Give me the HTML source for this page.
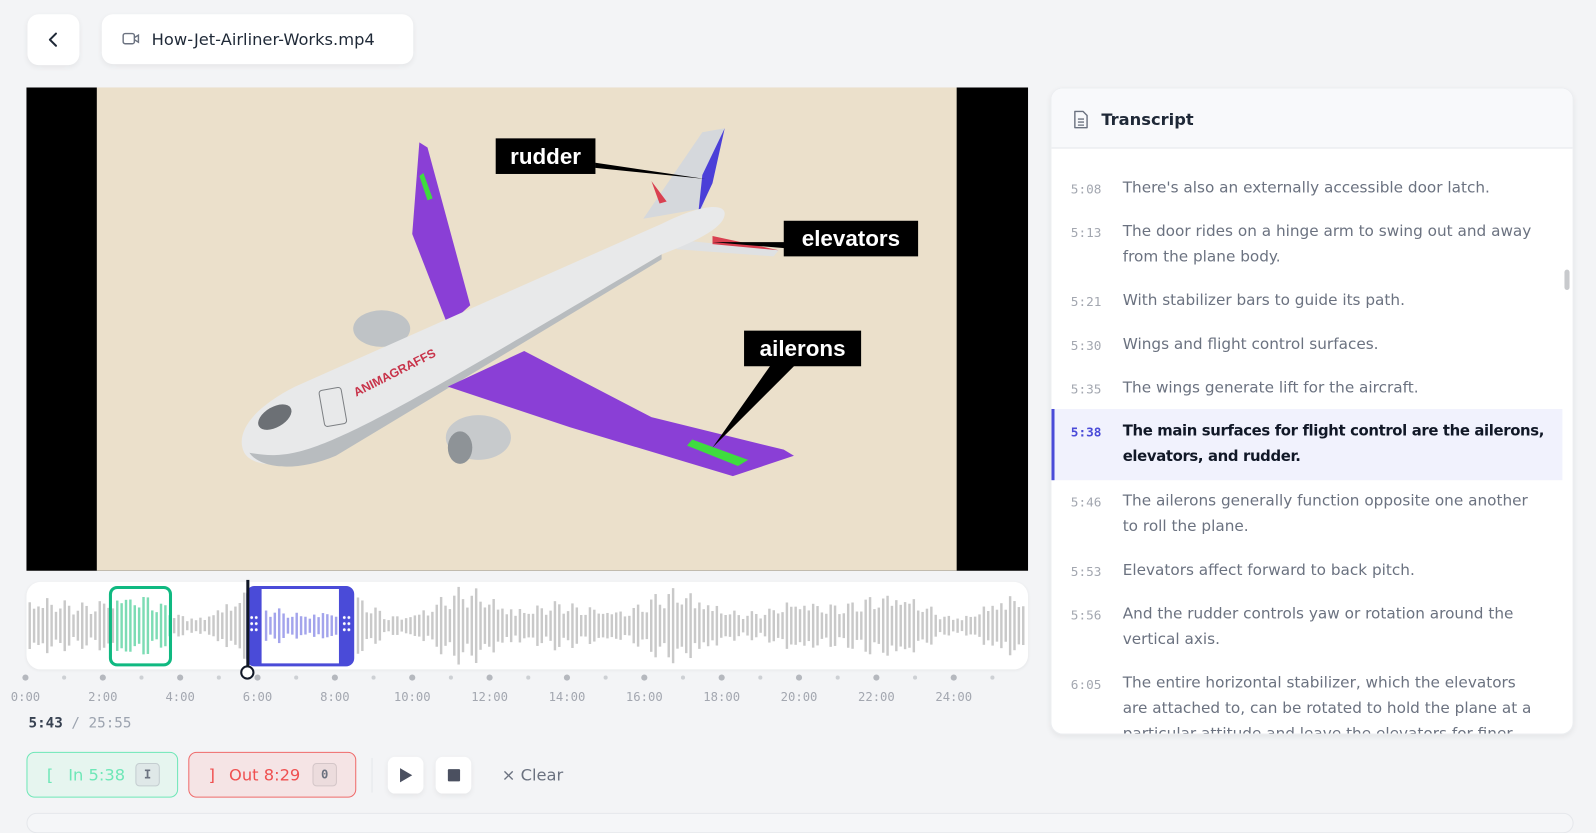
<!DOCTYPE html>
<html><head><meta charset="utf-8"><style>
*{box-sizing:border-box;margin:0;padding:0}
html,body{width:1596px;height:820px;overflow:hidden;background:#f3f4f6}
#w{position:absolute;left:0;top:0;width:1568px;height:806px;transform:scale(1.01786,1.01737);transform-origin:0 0;font-family:"Liberation Sans","DejaVu Sans",sans-serif}
.abs{position:absolute}
.card{background:#fff;border-radius:12px;box-shadow:0 2px 6px rgba(0,0,0,.06)}
.mono{font-family:"DejaVu Sans Mono","Liberation Mono",monospace}
.row{position:absolute;left:0;right:10px;display:flex;font-size:15px;line-height:25px;color:#6b7280;font-family:"DejaVu Sans",sans-serif}
.row .t{width:70px;padding-left:19px;font-size:12.5px;color:#a3a7b0;font-family:"DejaVu Sans Mono",monospace;padding-top:1px}
.row .x{flex:1;padding-right:20px}
.lbl{position:absolute;background:#000;color:#fff;font-weight:bold;font-size:22px;font-family:"Liberation Sans",sans-serif;text-align:center;line-height:35px}
.dots{position:absolute;top:30px;width:9px;height:18px;background:radial-gradient(circle,#fff 1.3px,transparent 1.6px) 0 0/4.5px 6px}
</style></head><body><div id="w">
<div class="abs card" style="left:27px;top:14px;width:51px;height:50px;border-radius:11px"><svg class="abs" style="left:17px;top:16px" width="18" height="18" viewBox="0 0 18 18"><path d="M11 3 L5 9 L11 15" fill="none" stroke="#1f2937" stroke-width="2" stroke-linecap="round" stroke-linejoin="round"/></svg></div>
<div class="abs card" style="left:100px;top:14px;width:306px;height:49px;border-radius:11px">
<svg class="abs" style="left:20px;top:17px" width="18" height="14" viewBox="0 0 18 14"><rect x="1" y="2" width="11" height="10" rx="2" fill="none" stroke="#6b7280" stroke-width="1.4"/><path d="M12 6 L16 3.5 V10.5 L12 8" fill="none" stroke="#6b7280" stroke-width="1.4"/></svg>
<div class="abs" style="left:49px;top:15px;font-size:16px;color:#1f2937;font-family:'DejaVu Sans',sans-serif;font-weight:500">How-Jet-Airliner-Works.mp4</div></div>

<div class="abs" style="left:26px;top:86px;width:984px;height:475px;background:#000"></div>
<svg class="abs" style="left:95px;top:86px" width="845" height="475" viewBox="95 86 845 475">
<rect x="95" y="86" width="845" height="475" fill="#ebe0cb"/>
<path d="M632 215 L690 130 L712 126 L690 205 Z" fill="#d5d8dc"/>
<path d="M690 172 L712 126 L700 180 L686 210 Z" fill="#4b3fd8"/>
<path d="M640 178 L655 198 L648 200 Z" fill="#d94050"/>
<path d="M660 235 L765 246 L760 252 L665 245 Z" fill="#dfe1e3"/>
<path d="M700 232 L765 246 L700 240 Z" fill="#d94050"/>
<path d="M412 140 L420 145 L462 300 L440 320 L405 230 Z" fill="#8a3fd6"/>
<path d="M416 170 L425 195 L420 197 L412 173 Z" fill="#3fdc3f"/>
<ellipse cx="375" cy="323" rx="28" ry="18" fill="#bfc3c6"/>
<path d="M240 445 C230 425 250 400 290 380 L650 220 C690 200 712 200 712 210 C712 222 690 235 650 250 L330 440 C290 460 250 462 240 445 Z" fill="#e8e9ea"/>
<path d="M245 445 C300 455 330 440 650 250 L650 255 L330 448 C290 465 255 460 245 445Z" fill="#b8bcbf"/>
<ellipse cx="270" cy="410" rx="18" ry="10" fill="#6c7075" transform="rotate(-30 270 410)"/>
<rect x="316" y="382" width="22" height="36" rx="3" fill="none" stroke="#7d8084" transform="rotate(-10 327 400)"/>
<text x="350" y="390" font-size="12" font-weight="bold" fill="#c8334a" transform="rotate(-27 350 390)" font-family="Liberation Sans">ANIMAGRAFFS</text>
<path d="M440 380 L515 345 L640 410 L770 442 L780 448 L720 468 L560 420 Z" fill="#8a3fd6"/>
<path d="M680 432 L735 452 L725 458 L675 438 Z" fill="#3fdc3f"/>
<ellipse cx="470" cy="430" rx="32" ry="22" fill="#c7cacc"/>
<ellipse cx="452" cy="440" rx="12" ry="16" fill="#8e9397"/>
<path d="M585 160 L693 176 L585 165 Z" fill="#000"/>
<path d="M700 238 L772 238 L772 244 Z" fill="#000"/>
<path d="M760 355 L785 355 L700 440 Z" fill="#000"/>
</svg>
<div class="lbl" style="left:487px;top:136px;width:98px">rudder</div>
<div class="lbl" style="left:770px;top:217px;width:132px">elevators</div>
<div class="lbl" style="left:731px;top:325px;width:115px">ailerons</div>

<div class="abs" style="left:26px;top:572px;width:984px;height:86px;background:#fff;border-radius:14px;box-shadow:0 1px 3px rgba(0,0,0,.05)"></div>
<svg id="wave" class="abs" style="left:0;top:560px" width="1020" height="110"></svg>
<div class="abs" style="left:107px;top:576px;width:62px;height:79px;border:3px solid #10b981;border-radius:8px"></div>
<div class="abs" style="left:242px;top:576px;width:106px;height:79px;border:3px solid #4a4bd8;border-left-width:15px;border-right-width:15px;border-radius:8px">
<div class="dots" style="left:-12px;top:25px"></div><div class="dots" style="right:-12px;top:25px"></div></div>
<div class="abs" style="left:242px;top:570px;width:3px;height:88px;background:#111827"></div>
<div class="abs" style="left:236px;top:654px;width:14px;height:14px;border:2.5px solid #111827;border-radius:50%;background:#fff"></div>
<div id="ticks"></div>
<div class="abs mono" style="left:28px;top:703px;font-size:14px;color:#9ca3af"><b style="color:#374151">5:43</b> / 25:55</div>

<div class="abs" style="left:26px;top:739px;width:149px;height:45px;background:#e6f5ef;border:1px solid #6ee7b7;border-radius:8px;color:#6ee7b7;font-size:16px;font-family:'DejaVu Sans',sans-serif">
<span class="abs" style="left:19px;top:12px">[</span><span class="abs" style="left:40px;top:12px">In 5:38</span><span class="abs mono" style="left:106px;top:10px;width:24px;height:23px;border:1px solid #c4cdd0;border-radius:4px;background:#dfe8e8;color:#6b7280;font-size:12px;text-align:center;line-height:21px;font-weight:bold">I</span></div>
<div class="abs" style="left:185px;top:739px;width:165px;height:45px;background:#f5e4e5;border:1px solid #ef6a6a;border-radius:8px;color:#ef5050;font-size:16px;font-family:'DejaVu Sans',sans-serif">
<span class="abs" style="left:19px;top:12px">]</span><span class="abs" style="left:39px;top:12px">Out 8:29</span><span class="abs mono" style="left:121px;top:10px;width:24px;height:23px;border:1px solid #d4c6c8;border-radius:4px;background:#ecdcdd;color:#6b7280;font-size:12px;text-align:center;line-height:21px;font-weight:bold">0</span></div>
<div class="abs" style="left:365px;top:745px;width:1px;height:34px;background:#e5e7eb"></div>
<div class="abs card" style="left:381px;top:744px;width:35px;height:36px;border-radius:7px"><svg class="abs" style="left:11px;top:10px" width="14" height="16"><path d="M1 1 L13 8 L1 15Z" fill="#4b5060"/></svg></div>
<div class="abs card" style="left:428px;top:744px;width:35px;height:36px;border-radius:7px"><div class="abs" style="left:12px;top:12px;width:12px;height:12px;background:#4b5060;border-radius:1px"></div></div>
<div class="abs" style="left:493px;top:752px;font-size:16px;color:#6b7280;font-family:'DejaVu Sans',sans-serif">× Clear</div>
<div class="abs" style="left:26px;top:799px;width:1520px;height:20px;border:1px solid #e5e7eb;border-radius:10px;background:#f5f6f8"></div>

<div class="abs card" style="left:1032px;top:86px;width:514px;height:636px;overflow:hidden;border:1px solid #eceef1">
<div class="abs" style="left:0;top:0;right:0;height:59px;background:#f8f9fb;border-bottom:1px solid #e5e7eb"></div>
<svg class="abs" style="left:21px;top:21px" width="16" height="19" viewBox="0 0 16 19"><path d="M2 1.5 H10 L14 5.5 V17.5 H2 Z" fill="none" stroke="#6b7280" stroke-width="1.4" stroke-linejoin="round"/><path d="M5 9 H11 M5 12 H11 M5 15 H11" stroke="#6b7280" stroke-width="1.3"/></svg>
<div class="abs" style="left:49px;top:21px;font-size:16px;font-weight:bold;color:#1f2937;font-family:'DejaVu Sans',sans-serif">Transcript</div>
<div class="abs" style="left:0;top:60px;right:0;bottom:0;overflow:hidden">
<div class="row" style="top:-20px"><div class="t"></div><div class="x">be opened.</div></div>
<div class="row" style="top:25px"><div class="t">5:08</div><div class="x">There's also an externally accessible door latch.</div></div>
<div class="row" style="top:68px"><div class="t">5:13</div><div class="x">The door rides on a hinge arm to swing out and away from the plane body.</div></div>
<div class="row" style="top:136px"><div class="t">5:21</div><div class="x">With stabilizer bars to guide its path.</div></div>
<div class="row" style="top:179px"><div class="t">5:30</div><div class="x">Wings and flight control surfaces.</div></div>
<div class="row" style="top:222px"><div class="t">5:35</div><div class="x">The wings generate lift for the aircraft.</div></div>
<div class="row" style="top:255px;height:70px;background:#f1f2fd;border-left:3px solid #4a4bd8;padding-top:9px;color:#111827;right:10px"><div class="t" style="color:#4a4bd8;width:67px;padding-left:16px;font-weight:bold">5:38</div><div class="x" style="font-weight:bold;font-size:14.6px;letter-spacing:-0.35px;padding-right:8px">The main surfaces for flight control are the ailerons, elevators, and rudder.</div></div>
<div class="row" style="top:333px"><div class="t">5:46</div><div class="x">The ailerons generally function opposite one another to roll the plane.</div></div>
<div class="row" style="top:401px"><div class="t">5:53</div><div class="x">Elevators affect forward to back pitch.</div></div>
<div class="row" style="top:444px"><div class="t">5:56</div><div class="x">And the rudder controls yaw or rotation around the vertical axis.</div></div>
<div class="row" style="top:512px"><div class="t">6:05</div><div class="x">The entire horizontal stabilizer, which the elevators are attached to, can be rotated to hold the plane at a particular attitude and leave the elevators for finer</div></div>
</div>
<div class="abs" style="right:3px;top:178px;width:5px;height:20px;background:#c8cacd;border-radius:3px"></div>
</div>
</div>
<script>
var s='',n=0;
for(var x=28;x<1008;x+=4.3){n++;
var env=0.35+0.45*Math.abs(Math.sin(x/60))+0.2*Math.sin(x/17);
var a=(env*(0.45+0.55*Math.abs(Math.sin(n*2.3)*Math.cos(n*0.7)))) *40;
if(a<4)a=4+n%5;
var c='#c9c9c9';
if(x>110&&x<166)c='#7ddcb4';
if(x>257&&x<333){c='#a3a4ec';a*=0.6;}
if(x>241&&x<258||x>332&&x<349)continue;
s+='<rect x="'+x.toFixed(1)+'" y="'+(55-a).toFixed(1)+'" width="2.4" height="'+(2*a).toFixed(1)+'" fill="'+c+'"/>';}
document.getElementById('wave').innerHTML=s;
var t='';
for(var i=0;i<26;i++){var x=25+i*38,big=i%2==0;
t+='<div class="abs" style="left:'+(x-(big?3:2))+'px;top:'+(666-(big?3:2))+'px;width:'+(big?6:4)+'px;height:'+(big?6:4)+'px;border-radius:50%;background:'+(big?'#b5b8be':'#cdd0d4')+'"></div>';
if(big)t+='<div class="abs mono" style="left:'+(x-30)+'px;width:60px;text-align:center;top:678px;font-size:12px;color:#a3a7b0">'+(i)+':00</div>';}
document.getElementById('ticks').innerHTML=t;
</script>
</body></html>
